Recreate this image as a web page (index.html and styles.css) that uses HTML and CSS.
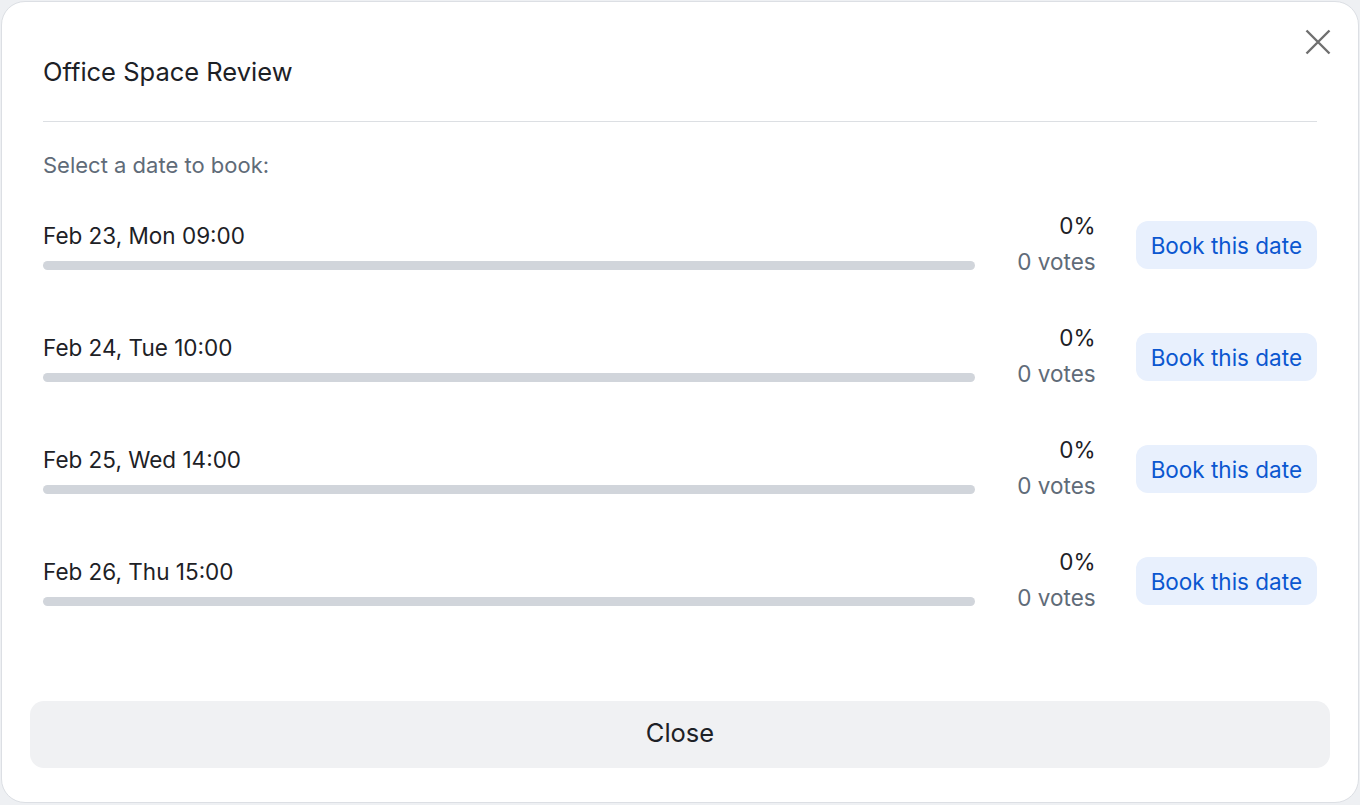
FILE: index.html
```html
<!DOCTYPE html>
<html lang="en">
<head>
<meta charset="utf-8">
<title>Office Space Review</title>
<link rel="stylesheet" href="styles.css">
</head>
<body>
<div class="modal">
  <button class="close-x" aria-label="Close">
    <svg width="26" height="26" viewBox="0 0 26 26"><path d="M1.5 1.5 L24.5 24.5 M24.5 1.5 L1.5 24.5" stroke="#6f6f6f" stroke-width="2.4" stroke-linecap="butt" fill="none"/></svg>
  </button>
  <div class="header">
    <h2 class="title">Office Space Review</h2>
  </div>
  <p class="subtitle">Select a date to book:</p>
  <div class="rows">
    <div class="row">
      <div class="info">
        <div class="label">Feb 23, Mon 09:00</div>
        <div class="bar"><div class="fill" style="width:0%"></div></div>
      </div>
      <div class="stats"><div class="pct">0%</div><div class="votes">0 votes</div></div>
      <button class="book">Book this date</button>
    </div>
    <div class="row">
      <div class="info">
        <div class="label">Feb 24, Tue 10:00</div>
        <div class="bar"><div class="fill" style="width:0%"></div></div>
      </div>
      <div class="stats"><div class="pct">0%</div><div class="votes">0 votes</div></div>
      <button class="book">Book this date</button>
    </div>
    <div class="row">
      <div class="info">
        <div class="label">Feb 25, Wed 14:00</div>
        <div class="bar"><div class="fill" style="width:0%"></div></div>
      </div>
      <div class="stats"><div class="pct">0%</div><div class="votes">0 votes</div></div>
      <button class="book">Book this date</button>
    </div>
    <div class="row">
      <div class="info">
        <div class="label">Feb 26, Thu 15:00</div>
        <div class="bar"><div class="fill" style="width:0%"></div></div>
      </div>
      <div class="stats"><div class="pct">0%</div><div class="votes">0 votes</div></div>
      <button class="book">Book this date</button>
    </div>
  </div>
  <div class="footer">
    <button class="close-btn">Close</button>
  </div>
</div>
</body>
</html>
```
FILE: styles.css
```css
* { box-sizing: border-box; }
html, body { margin: 0; padding: 0; }
body {
  background: #eef0f3;
  font-family: Inter, "Noto Sans", sans-serif;
  width: 1360px;
  height: 805px;
  overflow: hidden;
  padding: 1px 1px 0 1px;
}
.modal {
  position: relative;
  background: #ffffff;
  border: 1px solid #dcdfe4;
  border-radius: 24px;
  height: 802px;
  display: flex;
  flex-direction: column;
  padding: 0 41px;
}
.close-x {
  position: absolute;
  top: 27px;
  right: 27px;
  width: 26px;
  height: 26px;
  padding: 0;
  border: 0;
  background: none;
  cursor: pointer;
  display: block;
}
.close-x svg { display: block; }
.header {
  padding-top: 53px;
  padding-bottom: 32px;
  border-bottom: 1px solid #dcdfe3;
}
.title {
  margin: 0;
  font-size: 25.5px;
  line-height: 34px;
  font-weight: 400;
  color: #1d2126;
}
.subtitle {
  margin: 28px 0 0;
  font-size: 22px;
  line-height: 30px;
  color: #5f6b78;
}
.rows {
  margin-top: 29px;
  display: flex;
  flex-direction: column;
  gap: 40px;
}
.row {
  display: flex;
  align-items: center;
  min-height: 72px;
}
.info {
  flex: 1;
}
.label {
  font-size: 22.5px;
  line-height: 30px;
  color: #1d2126;
}
.bar {
  margin-top: 10px;
  height: 9px;
  border-radius: 5px;
  background: #d1d5db;
  overflow: hidden;
}
.fill { height: 100%; background: #0b57d0; }
.stats {
  width: 121px;
  text-align: right;
  padding-bottom: 2px;
}
.pct {
  font-size: 22.5px;
  line-height: 30px;
  color: #1d2126;
}
.votes {
  margin-top: 6px;
  font-size: 22.5px;
  line-height: 30px;
  color: #5f6b78;
}
.book {
  margin-left: 40px;
  height: 48px;
  padding: 0 15px;
  border: 0;
  border-radius: 12px;
  background: #e8f0fd;
  color: #0b57d0;
  font-family: inherit;
  font-size: 22.5px;
  cursor: pointer;
}
.footer {
  margin-top: auto;
  padding-bottom: 34px;
  margin-left: -13px;
  margin-right: -13px;
}
.close-btn {
  display: block;
  width: 100%;
  height: 67px;
  padding: 0 0 4px;
  border: 0;
  border-radius: 14px;
  background: #f0f1f3;
  color: #1d2126;
  font-family: inherit;
  font-size: 25.5px;
  cursor: pointer;
}
```
